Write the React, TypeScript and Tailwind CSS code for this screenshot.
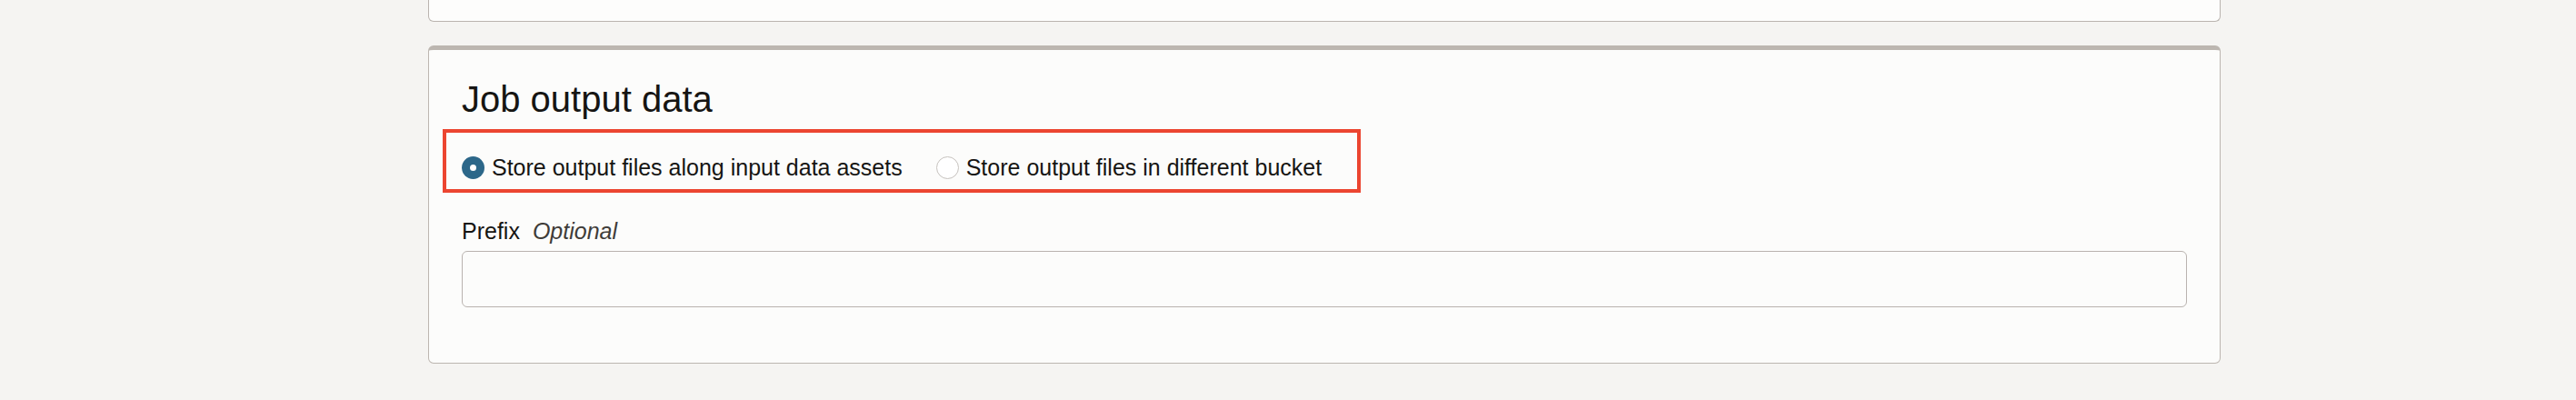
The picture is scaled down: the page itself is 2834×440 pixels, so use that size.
import React from "react";

export default function App() {
  return (
    <div
      className="min-h-[440px] w-[2834px] overflow-hidden bg-[#f5f4f2] text-[#161513]"
      style={{ fontFamily: '"Liberation Sans", Arial, Helvetica, sans-serif' }}
    >
      <div className="ml-[471px] w-[1972px]">
        {/* bottom of previous card */}
        <div className="h-[24px] rounded-b-[6px] border border-t-0 border-[#bab4af] bg-[#fdfdfc]" />

        {/* Job output data card */}
        <div className="mt-[26px] rounded-[6px] border border-t-[5px] border-[#bcb6b0] bg-[#fcfcfb] px-[36px] pt-[30px] pb-[61px]">
          <h2 className="text-[40px] leading-[48px] font-normal">Job output data</h2>

          <div className="relative mt-[36px]">
            <div className="flex items-center text-[25px] leading-[30px]">
              <label className="flex items-center gap-[8px]">
                <span className="flex h-[25px] w-[25px] items-center justify-center rounded-full bg-[#2c6789]">
                  <span className="h-[7px] w-[7px] rounded-full bg-white" />
                </span>
                <span>Store output files along input data assets</span>
              </label>
              <label className="ml-[37px] flex items-center gap-[8px]">
                <span className="h-[25px] w-[25px] rounded-full border border-[#c6c2be] bg-white" />
                <span>Store output files in different bucket</span>
              </label>
            </div>
            <div className="pointer-events-none absolute left-[-21px] top-[-27px] h-[70px] w-[1010px] border-4 border-[#ec4530]" />
          </div>

          <div className="mt-[40px] flex items-baseline text-[25px] leading-[30px]">
            <span>Prefix</span>
            <span className="ml-[14px] italic text-[#3f3c39]">Optional</span>
          </div>
          <input
            type="text"
            className="mt-[7px] block h-[62px] w-full rounded-[6px] border border-[#b9b3af] bg-[#fcfcfb] px-[16px] text-[25px] outline-none"
          />
        </div>
      </div>
    </div>
  );
}
